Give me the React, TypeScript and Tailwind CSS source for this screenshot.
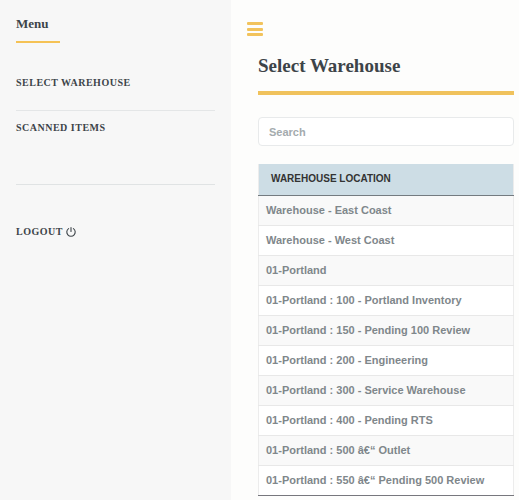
const locations = [
  "Warehouse - East Coast",
  "Warehouse - West Coast",
  "01-Portland",
  "01-Portland : 100 - Portland Inventory",
  "01-Portland : 150 - Pending 100 Review",
  "01-Portland : 200 - Engineering",
  "01-Portland : 300 - Service Warehouse",
  "01-Portland : 400 - Pending RTS",
  "01-Portland : 500 â€“ Outlet",
  "01-Portland : 550 â€“ Pending 500 Review",
];

function PowerIcon() {
  return (
    <svg
      className="size-[10px]"
      viewBox="0 0 10 10"
      fill="none"
      stroke="currentColor"
      strokeWidth="1.1"
      strokeLinecap="round"
      aria-hidden="true"
    >
      <path d="M2.6 1.6a4.2 4.2 0 1 0 4.8 0M5 .6v3.9" />
    </svg>
  );
}

function Sidebar() {
  return (
    <aside className="w-[231px] shrink-0 bg-[#f7f7f7] pt-3 pr-4 pl-4 font-['Liberation_Serif',serif] font-bold text-[#3d4449]">
      <h2 className="w-11 border-b-2 border-[#f5c255] pt-1 pb-[9px] text-[13px] leading-4">
        Menu
      </h2>
      <nav className="mt-8 text-[10px] leading-4 tracking-wider uppercase">
        <a href="#select" className="block border-b border-[#e4e6e7] pb-[19px]">
          Select Warehouse
        </a>
        <a href="#scanned" className="block border-b border-[#e0e3e4] pt-[9px] pb-12">
          Scanned Items
        </a>
        <a href="#logout" className="mt-[39px] flex items-center gap-[3px]">
          Logout
          <PowerIcon />
        </a>
      </nav>
    </aside>
  );
}

function LocationTable() {
  return (
    <table className="mt-[18px] w-full border-collapse border-x border-[#ececec] text-left text-[11px] leading-4 font-bold">
      <thead>
        <tr className="h-[31px] border-b border-[#747b80] bg-[#cddde5] text-[10px] text-[#333333]">
          <th scope="col" className="pl-3">
            WAREHOUSE LOCATION
          </th>
        </tr>
      </thead>
      <tbody className="border-b border-[#77777d] text-[#7f878b]">
        {locations.map((name) => (
          <tr
            key={name}
            className="h-[30px] border-b border-[#e8e8e8] bg-white last:border-[#77777d] odd:bg-[#f9f9f9]"
          >
            <td className="pl-[7px]">{name}</td>
          </tr>
        ))}
      </tbody>
    </table>
  );
}

export default function App() {
  return (
    <div className="flex min-h-screen bg-[#fdfdfc] font-['Liberation_Sans',Arial,sans-serif]">
      <Sidebar />
      <main className="min-w-0 grow pt-[22px] pr-[5px] pl-4">
        <button
          type="button"
          aria-label="Toggle menu"
          className="flex h-[14px] w-4 flex-col justify-between text-[#f2c35c]"
        >
          <span className="h-[3px] w-full rounded-[1px] bg-current" />
          <span className="h-[3px] w-full rounded-[1px] bg-current" />
          <span className="h-[3px] w-full rounded-[1px] bg-current" />
        </button>
        <section className="pt-[18px] pl-[11px]">
          <h1 className="border-b-4 border-[#f0c25c] pb-[13px] font-['Liberation_Serif',serif] text-[19px] leading-6 font-bold text-[#3d4449]">
            Select Warehouse
          </h1>
          <input
            type="search"
            aria-label="Search"
            placeholder="Search"
            className="mt-[22px] block h-[29px] w-full rounded border border-[#e8eaeb] bg-white px-[10px] text-[11px] text-[#7f878b] outline-none placeholder:font-bold placeholder:text-[#a4abae]"
          />
          <LocationTable />
        </section>
      </main>
    </div>
  );
}
